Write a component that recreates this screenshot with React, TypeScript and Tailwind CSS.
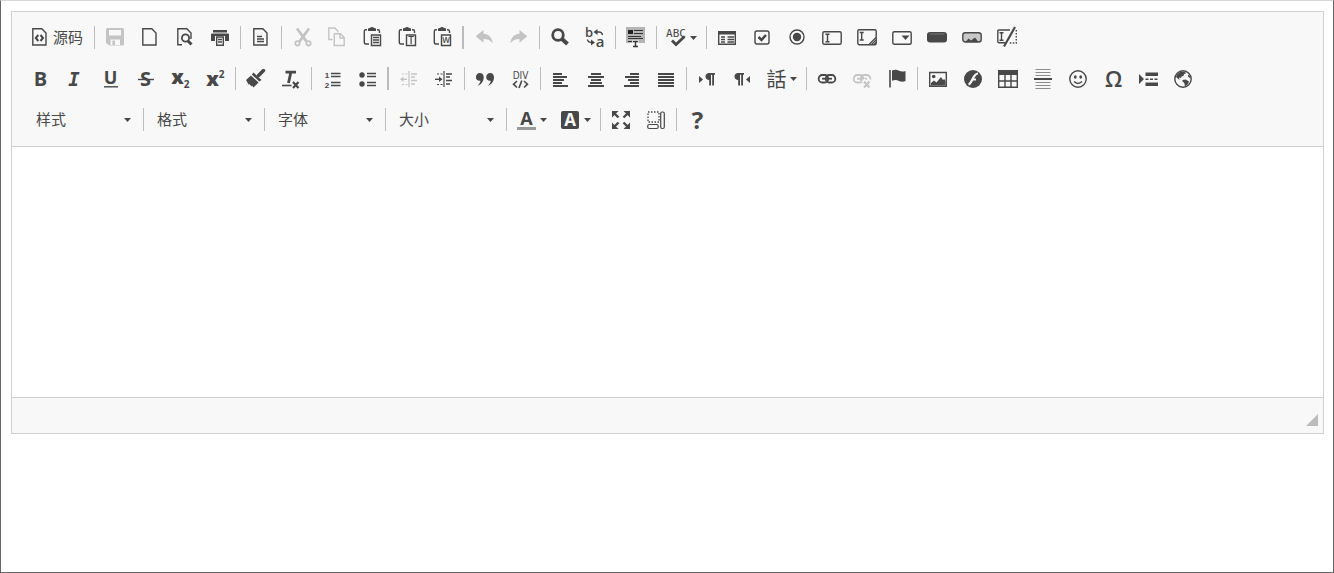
import type { ReactNode } from "react";
import clsx from "clsx";

type Tool = {
  label: string;
  icon: ReactNode;
  disabled?: boolean;
  menu?: boolean;
  text?: string;
};

type GlyphProps = {
  x: number;
  y: number;
  size: number;
  font?: string;
  weight?: number;
  italic?: boolean;
  color?: string;
  children: string;
};

function Glyph({ x, y, size, font = "Open Sans", weight = 700, italic, color = "currentColor", children }: GlyphProps) {
  return (
    <text
      x={x}
      y={y}
      fontSize={size}
      fontFamily={`"${font}", sans-serif`}
      fontWeight={weight}
      fontStyle={italic ? "italic" : "normal"}
      textAnchor="middle"
      fill={color}
      stroke="none"
    >
      {children}
    </text>
  );
}

function Solid({ children }: { children: ReactNode }) {
  return <g fill="currentColor" stroke="none">{children}</g>;
}

const clipboard = (
  <>
    <path d="M5 2.8H3.8Q2.3 2.8 2.3 4.3v11.2Q2.3 17 3.8 17H7M15 2.8h1Q17.5 2.8 17.5 4.3V6" />
    <Solid><path d="M6 4V2q0-1 1.5-1H8q.5-1 2-1t2 1h.5Q14 1 14 2v2z" /></Solid>
    <path d="M9.5 8h9v10.5h-9z" />
  </>
);

const arrowBack = <path d="M1.7 9.3 9.5 3v3.7c5 .2 8.500 3.500 9.300 9.500-2.500-3-5-4.200-9.300-4.300v3.800z" />;

const indentLines = (
  <>
    <path d="M10 3v16" strokeWidth="1.2" />
    <path d="M12 6h6M12 9h4M12 12.5h6M12 16h4" strokeWidth="1.6" />
    <path d="M3 6h6M3 16.5h6" strokeDasharray="2 1.5" strokeWidth="1.2" />
  </>
);

const chain = (
  <>
    <rect x="1.7" y="7" width="9.5" height="7.5" rx="3.5" strokeWidth="1.8" />
    <rect x="8.8" y="7" width="9.5" height="7.5" rx="3.5" strokeWidth="1.8" />
    <path d="M5 10.7h10" strokeWidth="1.8" />
  </>
);

const page = <path d="M2.8 1.8h9L16 6v12H2.8z" />;

const documentTools: Tool[][] = [
  [
    {
      label: "源码",
      text: "源码",
      icon: <>{page}<path d="M8.3 8 5.8 11l2.5 3M10.5 8l2.5 3-2.5 3" strokeWidth="2" /></>,
    },
  ],
  [
    {
      label: "保存",
      disabled: true,
      icon: (
        <>
          <Solid><path fillRule="evenodd" d="M2.5 1h15Q19 1 19 2.5V17q0 1.500-1.500 1.500h-13L1 16V2.500Q1 1 2.500 1zM4 3v5.500h12V3zM5.500 12.500V18H15v-5.500z" /></Solid>
          <path d="M8.7 13.500V18" strokeWidth="2.5" />
        </>
      ),
    },
    { label: "新建", icon: page },
    {
      label: "预览",
      icon: (
        <>
          <path d="M7 17.8H2.8v-16h9L16 6v6" />
          <circle cx="10.5" cy="11" r="3.6" strokeWidth="1.8" />
          <path d="m13 14 3.5 3.5" strokeWidth="3" />
        </>
      ),
    },
    {
      label: "打印",
      icon: (
        <>
          <Solid><path d="M3 3h14v2.500H3zM2 6.500h16q1 0 1 1V14h-4V9H5v5H1V7.500q0-1 1-1z" /></Solid>
          <path d="M6.700 10v8.200h6.600V10zM8 12.500h4M8 15h4" strokeWidth="1.4" />
        </>
      ),
    },
  ],
  [{ label: "模板", icon: <>{page}<path d="M6 9.5h5M6 12h7M6 14.5h7" strokeWidth="1.4" /></> }],
  [
    {
      label: "剪切",
      disabled: true,
      icon: (
        <>
          <path d="m5 1.500 9.500 13M17 1.500l-9.500 13" strokeWidth="2.8" />
          <circle cx="5.5" cy="16.3" r="2.2" strokeWidth="1.8" />
          <circle cx="16.5" cy="16.3" r="2.2" strokeWidth="1.8" />
        </>
      ),
    },
    { label: "复制", disabled: true, icon: <path d="M5.500 12.500H1.800V1h6l3 3v1.500M7.300 6.800h6.200l3.700 3.700v8H7.300zM13 7v4h4" strokeWidth="1.4" /> },
    { label: "粘贴", icon: <>{clipboard}<path d="M11 10.5h6M11 13h6M11 15.5h6" strokeWidth="1.4" /></> },
    { label: "粘贴为无格式文本", icon: <>{clipboard}<Glyph x={14} y={17} size={10} weight={600}>T</Glyph></> },
    { label: "从 Word 粘贴", icon: <>{clipboard}<Glyph x={14} y={16} size={8} weight={600}>W</Glyph></> },
  ],
  [
    { label: "撤消", disabled: true, icon: <Solid>{arrowBack}</Solid> },
    { label: "重做", disabled: true, icon: <Solid><g transform="matrix(-1 0 0 1 20 0)">{arrowBack}</g></Solid> },
  ],
  [
    { label: "查找", icon: <><circle cx="8" cy="8" r="5.300" strokeWidth="2.8" /><path d="m12 12 5.500 5" strokeWidth="4" /></> },
    {
      label: "替换",
      icon: (
        <>
          <Glyph x={4} y={10} size={13} weight={600}>b</Glyph>
          <Glyph x={15} y={20} size={15} weight={600}>a</Glyph>
          <path d="M11 5h3q3 0 3.500 3M2.500 12.500q.5 3 3.500 3h2" />
          <Solid><path d="m8.500 5 4-3v6zM10 15.500l-4-3v6z" /></Solid>
        </>
      ),
    },
  ],
  [
    {
      label: "全选",
      icon: (
        <>
          <rect x="0" y="0" width="19" height="16" fill="#b4b4b4" stroke="none" />
          <rect x="2" y="3" width="5" height="4" fill="#222" stroke="none" />
          <path d="M8 3.500h9M8 6.500h9M2 9.500h13M2 11.500h15M2 14.500h4" stroke="#333" strokeWidth="1" />
          <rect x="6.500" y="13" width="6" height="7" fill="#f8f8f8" stroke="none" />
          <path d="M7 14.500h5M9.500 14.500v5M7 19.500h5" stroke="#333" strokeWidth="1.4" />
        </>
      ),
    },
  ],
  [
    {
      label: "拼写检查",
      menu: true,
      icon: (
        <>
          <Glyph x={9} y={10} size={11} font="DejaVu Sans Mono" weight={400}>ABC</Glyph>
          <path d="m5 13.500 4 4 8.500-8" strokeWidth="2.8" />
        </>
      ),
    },
  ],
  [
    {
      label: "表单",
      icon: (
        <>
          <path d="M1.700 4.700h16.600v12.600H1.700z" />
          <Solid><path d="M1 4h18v3.500H1z" /></Solid>
          <path d="M4 10h4M4 12.500h4M4 15h4M10.500 10H17M10.500 12.500H17M10.500 15H17" />
        </>
      ),
    },
    { label: "复选框", icon: <><rect x="3" y="4" width="14" height="13" rx="2" /><path d="m6.500 10 3 3 4.500-5" strokeWidth="2.5" /></> },
    { label: "单选按钮", icon: <><circle cx="10" cy="10" r="7" /><Solid><circle cx="10" cy="10" r="4.200" /></Solid></> },
    { label: "单行文本", icon: <><rect x=".8" y="4.700" width="18.400" height="12.500" rx="1.500" /><path d="M3.500 7.300h4M5.500 7.300v7.400M3.500 14.700h4" /></> },
    {
      label: "多行文本",
      icon: (
        <>
          <rect x=".8" y="2.700" width="18.400" height="15" rx="1.500" />
          <path d="M2.700 5.500h4M4.700 5.500v7.500M2.700 13h4" />
          <path d="m12 17.500 7-7M14.500 17.500l4.500-4.500M17 17.500l2-2" strokeWidth="1.2" />
        </>
      ),
    },
    { label: "列表/菜单", icon: <><rect x=".8" y="4.700" width="18.400" height="12.500" rx="1.500" /><Solid><path d="M9.500 8.500h8l-4 4.500z" /></Solid></> },
    {
      label: "按钮",
      icon: (
        <>
          <Solid><rect x="0" y="5" width="20" height="10.500" rx="3" /></Solid>
          <path d="M2.500 7h15" stroke="#777" strokeWidth="1" />
        </>
      ),
    },
    {
      label: "图像按钮",
      icon: (
        <>
          <rect x=".8" y="5.700" width="18.400" height="9.300" rx="2.500" fill="#c8c8c8" />
          <Solid><path d="m3.500 15 3-3.500 2.500 2 4-3 3.500 4.500z" /></Solid>
        </>
      ),
    },
    {
      label: "隐藏域",
      icon: (
        <>
          <path d="M13 3H2Q.8 3 .8 4.200v10.300q0 1.300 1.200 1.300h6M2.500 5.700h4M4.500 5.700v7.600M2.500 13.300h4" />
          <path d="M19.300 3v13H12" strokeDasharray="1.500 1.500" />
          <path d="M18 0 7 19.500" strokeWidth="2.200" />
        </>
      ),
    },
  ],
];

const align = (d: string) => <path d={d} strokeWidth="2" />;

const formatTools: Tool[][] = [
  [
    { label: "加粗", icon: <Glyph x={10.5} y={18} size={20}>B</Glyph> },
    { label: "倾斜", icon: <Glyph x={9} y={18} size={19} font="DejaVu Sans Mono" italic>I</Glyph> },
    { label: "下划线", icon: <><Glyph x={10.5} y={15.5} size={18}>U</Glyph><path d="M4 18.800h14" /></> },
    { label: "删除线", icon: <><Glyph x={10.5} y={18} size={20}>S</Glyph><path d="M3 11.500h16" /></> },
    { label: "下标", icon: <><Glyph x={7.5} y={16} size={20} weight={800}>x</Glyph><Glyph x={16.5} y={20} size={10}>2</Glyph></> },
    { label: "上标", icon: <><Glyph x={7.5} y={17.5} size={20} weight={800}>x</Glyph><Glyph x={16.5} y={10} size={10}>2</Glyph></> },
  ],
  [
    {
      label: "复制格式",
      icon: (
        <>
          <path d="m17.500 2.500-5 5" strokeWidth="3.5" strokeLinecap="round" />
          <Solid><path d="m7.500 4.500 8 7.500-2.200 1.500-7.500-7zM5 7.500l7.500 7-5 5L6 17.500l-.5 1-2-2.500-.5 1L0 12z" /></Solid>
        </>
      ),
    },
    {
      label: "清除格式",
      icon: (
        <>
          <path d="M4.500 4.200H15M9.800 4.500 7.500 15" strokeWidth="2.8" />
          <path d="M1 17.500h9.500" strokeWidth="1.6" />
          <path d="m12 14 5.500 6M17.500 14 12 20" strokeWidth="2.2" />
        </>
      ),
    },
  ],
  [
    {
      label: "编号列表",
      icon: (
        <>
          <Glyph x={5} y={10} size={8} font="Liberation Sans">1</Glyph>
          <Glyph x={5} y={20} size={8} font="Liberation Sans">2</Glyph>
          <path d="M9 5.500h9.500M9 8.500h9.500M9 14.500h9.500M9 17.500h9.500" />
        </>
      ),
    },
    {
      label: "项目列表",
      icon: (
        <>
          <Solid><circle cx="5" cy="7" r="2.700" /><circle cx="5" cy="16" r="2.700" /></Solid>
          <path d="M10 5.500h9M10 8.500h9M10 14.500h9M10 17.500h9" />
        </>
      ),
    },
  ],
  [
    { label: "减少缩进量", disabled: true, icon: <>{indentLines}<path d="M3 11.300h5" /><Solid><path d="m1 11.300 3.500-2.800v5.600z" /></Solid></> },
    { label: "增加缩进量", icon: <>{indentLines}<path d="M1 11.300h5" /><Solid><path d="M8.500 11.300 5 8.500v5.600z" /></Solid></> },
  ],
  [
    {
      label: "块引用",
      icon: (
        <Solid>
          <path d="M4.700 5C7 5 8.700 6.500 8.700 9.300c0 4.200-2.700 7.200-6.200 8.700 1.700-1.800 2.800-3.500 3-5.200C2.500 13.200.9 11.200.9 9.200.9 6.800 2.700 5 4.700 5z" />
          <path d="M15 5c2.300 0 4 1.500 4 4.300 0 4.200-2.700 7.200-6.200 8.700 1.700-1.800 2.800-3.500 3-5.200-3 .4-4.600-1.600-4.600-3.600C11.200 6.800 13 5 15 5z" />
        </Solid>
      ),
    },
    {
      label: "创建 DIV 容器",
      icon: (
        <>
          <Glyph x={10.5} y={10.5} size={10} font="DejaVu Sans Condensed" weight={400}>DIV</Glyph>
          <path d="m7 13-3.500 3.200L7 19.500M14 13l3.500 3.200-3.500 3.300M11.800 12.500 9 20" strokeWidth="1.6" />
        </>
      ),
    },
  ],
  [
    { label: "左对齐", icon: align("M2 6h9M2 9h14M2 12h11M2 15h9M2 18h15") },
    { label: "居中", icon: align("M5 6h10M2 9h16M5 12h10M4 15h12M2 18h16") },
    { label: "右对齐", icon: align("M9 6h9M4 9h14M7 12h11M9 15h9M3 18h15") },
    { label: "两端对齐", icon: align("M2 6h16M2 9h16M2 12h16M2 15h16M2 18h16") },
  ],
  [
    {
      label: "文字方向为从左至右",
      icon: (
        <Solid>
          <path d="m2 8 4 3.500L2 15z" />
          <path d="M12 5h6v1.800h-1V17.500h-1.800V6.800H14V17.500h-1.800V12C10 12 8.500 10.500 8.500 8.500S10 5 12 5z" />
        </Solid>
      ),
    },
    {
      label: "文字方向为从右至左",
      icon: (
        <Solid>
          <path d="m18 8-4 3.500 4 3.500z" />
          <path d="M6 5h6v1.800h-1V17.500H9.200V6.800H8V17.500H6.200V12C4 12 2.500 10.500 2.500 8.500S4 5 6 5z" />
        </Solid>
      ),
    },
    { label: "语言", menu: true, icon: <Glyph x={9.5} y={18.5} size={20} font="Noto Sans CJK TC" weight={400}>話</Glyph> },
  ],
  [
    { label: "插入超链接", icon: chain },
    {
      label: "取消超链接",
      disabled: true,
      icon: (
        <>
          {chain}
          <path d="m11 12 8 8M19 12l-8 8" stroke="#f8f8f8" strokeWidth="4" />
          <path d="m12 13.500 5.500 6M17.500 13.500l-5.500 6" strokeWidth="2" />
        </>
      ),
    },
    {
      label: "锚点",
      icon: (
        <>
          <path d="M3 2v17.500" strokeWidth="1.6" />
          <Solid><path d="M5 2.500c2.500-1 5-1 7 .3 2 1 4.500 1 6.500.2v10c-2 1-4.500 1-6.500 0-2-1.300-4.500-1.300-7-.3z" /></Solid>
        </>
      ),
    },
  ],
  [
    {
      label: "图像",
      icon: (
        <>
          <path d="M1.700 4.500h16.600v13.800H1.700z" />
          <Solid><circle cx="5.700" cy="8.500" r="1.800" /><path d="M3 17.500V15l3-2.500 2.500 2L13 9l2 3 1.200-1 1.300 2v4.500z" /></Solid>
        </>
      ),
    },
    {
      label: "Flash",
      icon: (
        <>
          <Solid><circle cx="10" cy="11" r="9" /></Solid>
          <path d="M15 5.500c-5 0-5.500 9.500-9.500 11M8.500 11.500h4.500" stroke="#f8f8f8" strokeWidth="2.2" />
        </>
      ),
    },
    {
      label: "表格",
      icon: (
        <>
          <path d="M.7 3v16.300h18.600V3M7 6v13M13 6v13M1 13h18" strokeWidth="1.4" />
          <Solid><path d="M0 2h20v5H0z" /></Solid>
        </>
      ),
    },
    {
      label: "插入水平线",
      icon: (
        <>
          <path d="M2.500 1.500h15M2.500 4.500h15M2.500 7.500h15M2.500 14.500h15M2.500 17.500h15M2.500 20.500h15" stroke="#8c8c8c" strokeWidth="1" />
          <path d="M1 11h18" strokeWidth="2" />
        </>
      ),
    },
    {
      label: "表情符",
      icon: (
        <>
          <circle cx="10" cy="11" r="8.200" />
          <path d="M6 13.500q4 3.800 8 0" />
          <Solid><ellipse cx="7.300" cy="9" rx="1.400" ry="1.800" /><ellipse cx="12.700" cy="9" rx="1.400" ry="1.800" /></Solid>
        </>
      ),
    },
    { label: "插入特殊符号", icon: <Glyph x={10.5} y={19} size={22} weight={600}>Ω</Glyph> },
    {
      label: "插入打印分页符",
      icon: (
        <>
          <Solid><path d="m1 6 5 5-5 5zM7.500 4.500H20V8H7.500zM7.500 14.500H20V18H7.500z" /></Solid>
          <path d="M7.500 11.300H20" strokeDasharray="3 1.5" />
        </>
      ),
    },
    {
      label: "内嵌框架",
      icon: (
        <>
          <circle cx="10" cy="11" r="8.200" />
          <Solid>
            <path d="M4 6.500 7.500 3.500l4.500.3 1 1.700-2 .5-.5 2-2 .5-.5 1.500-2-.5.500 2.500L3 9z" />
            <path d="m9.500 12 3-.5 3.500 2-1 2.500-3 2.500-.7-3.500-1.800-1.500zM15 6.500l2.500 2-1 1.500-1.500-1.500z" />
          </Solid>
        </>
      ),
    },
  ],
];

const colorTools: Tool[][] = [
  [
    {
      label: "文本颜色",
      menu: true,
      icon: <><Glyph x={9.5} y={16} size={18}>A</Glyph><rect x="0" y="18" width="19" height="3" fill="#999" stroke="none" /></>,
    },
    {
      label: "背景颜色",
      menu: true,
      icon: <><Solid><rect x="0" y="2" width="18" height="18" rx="2" /></Solid><Glyph x={9} y={17} size={17} color="#f8f8f8">A</Glyph></>,
    },
  ],
  [
    {
      label: "全屏",
      icon: (
        <>
          <path d="m3.500 4.500 4 4M16.500 4.500l-4 4M3.500 17.500l4-4M16.500 17.500l-4-4" strokeWidth="2.4" />
          <Solid><path d="M1 2h6.500L1 8.500zM19 2h-6.500L19 8.500zM1 20h6.500L1 13.500zM19 20h-6.500l6.500-6.500z" /></Solid>
        </>
      ),
    },
    {
      label: "显示区块",
      icon: (
        <>
          <path d="M2 3h11v10H2z" strokeDasharray="1.5 1.5" strokeWidth="1.3" />
          <rect x="14.700" y="3" width="3.600" height="16.500" rx="1.500" strokeWidth="1.2" />
          <rect x="1.700" y="15.500" width="10.500" height="4" rx="1.500" strokeWidth="1.2" />
        </>
      ),
    },
  ],
  [{ label: "关于", icon: <Glyph x={10.5} y={20} size={24}>?</Glyph> }],
];

const combos = [
  { id: "styles", label: "样式" },
  { id: "format", label: "格式" },
  { id: "font", label: "字体" },
  { id: "size", label: "大小" },
];

function Caret({ className }: { className?: string }) {
  return (
    <svg viewBox="0 0 7 4" className={clsx("h-1 w-[7px] shrink-0 fill-[#484848]", className)} aria-hidden="true">
      <path d="M0 0h7L3.500 4z" />
    </svg>
  );
}

function Separator({ wide }: { wide?: boolean }) {
  return <span className={clsx("mr-0.5 ml-[3px] h-[23px] shrink-0 bg-[#bcbcbc]", wide ? "w-0.5" : "w-px")} />;
}

function ToolButton({ tool }: { tool: Tool }) {
  return (
    <button
      type="button"
      aria-label={tool.label}
      disabled={tool.disabled}
      className={clsx(
        "flex h-[31px] shrink-0 items-start pt-[5px] pl-2 enabled:hover:bg-[#e5e5e5]",
        tool.disabled ? "text-[#c4c4c4]" : "text-[#484848]",
        tool.text ? "pr-2" : tool.menu ? "pr-1.5" : "pr-[7px]",
      )}
    >
      <svg viewBox="0 0 20 20" className="size-5 overflow-visible" fill="none" stroke="currentColor" strokeWidth="1.4" aria-hidden="true">
        {tool.icon}
      </svg>
      {tool.text && <span className="ml-[3px] text-[15px] leading-5">{tool.text}</span>}
      {tool.menu && <Caret className="mt-[9px] ml-[3px]" />}
    </button>
  );
}

function Groups({ groups, wideAfter }: { groups: Tool[][]; wideAfter?: number }) {
  return groups.map((group, i) => (
    <div key={i} className="flex items-center">
      {group.map((tool) => <ToolButton key={tool.label} tool={tool} />)}
      {i < groups.length - 1 && <Separator wide={i === wideAfter} />}
    </div>
  ));
}

function Combo({ id, label }: { id: string; label: string }) {
  return (
    <div className="grid w-[115px] items-center">
      <select
        id={id}
        aria-label={label}
        className="col-start-1 row-start-1 h-[31px] w-full appearance-none bg-transparent pr-5 pb-0.5 pl-[11px] text-[15px] leading-5 text-[#484848] outline-none"
      >
        <option>{label}</option>
      </select>
      <Caret className="pointer-events-none col-start-1 row-start-1 mr-[9px] justify-self-end" />
    </div>
  );
}

export default function App() {
  return (
    <div className="min-h-screen border border-[#666] border-t-[#d8d8d8] bg-white py-[10px] pr-[9px] pl-[10px] font-['Noto_Sans_CJK_SC',sans-serif]">
      <div className="border border-[#d1d1d1]">
        <div role="toolbar" aria-label="工具栏" className="flex flex-col gap-[10px] border-b border-[#d1d1d1] bg-[#f8f8f8] px-[10px] pt-[10px] pb-[11px]">
          <div className="flex flex-wrap items-center">
            <Groups groups={documentTools} wideAfter={3} />
          </div>
          <div className="flex flex-wrap items-center">
            <Groups groups={formatTools} wideAfter={2} />
          </div>
          <div className="flex flex-wrap items-center pl-[3px]">
            {combos.map((c) => (
              <div key={c.id} className="flex items-center">
                <Combo id={c.id} label={c.label} />
                <Separator />
              </div>
            ))}
            <Groups groups={colorTools} />
          </div>
        </div>
        <textarea aria-label="编辑器" className="block h-[250px] w-full resize-none bg-white p-5 text-[15px] outline-none" />
        <div className="flex h-9 items-end justify-end border-t border-[#d1d1d1] bg-[#f8f8f8] pr-[5px] pb-[7px]">
          <svg viewBox="0 0 12 12" className="size-3 cursor-se-resize fill-[#bcbcbc]" aria-hidden="true">
            <path d="M12 0v12H0z" />
          </svg>
        </div>
      </div>
    </div>
  );
}
